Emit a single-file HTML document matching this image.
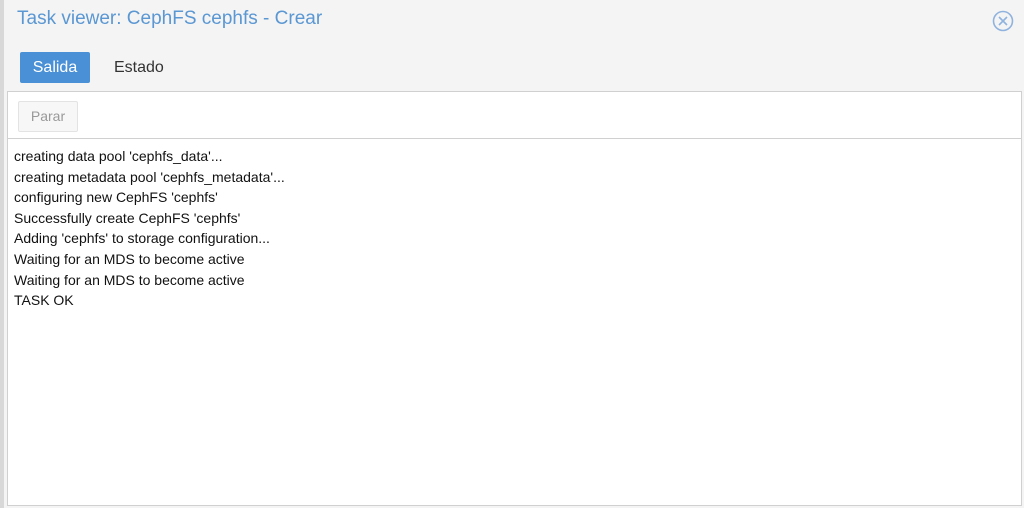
<!DOCTYPE html>
<html><head><meta charset="utf-8"><style>
body{margin:0;width:1024px;height:508px;background:#f4f4f4;font-family:"Liberation Sans",sans-serif;position:relative;overflow:hidden}
.strip{position:absolute;left:0;top:0;width:4px;height:508px;background:#d8d8d8}
.title{position:absolute;left:17px;top:8px;font-size:19px;color:#5a97d3}
.close{position:absolute;left:992px;top:10px}
.tab1{position:absolute;left:20px;top:52px;width:70px;height:31px;background:#4a90d6;border-radius:2px;color:#fff;font-size:16px;line-height:31px;text-align:center}
.tab2{position:absolute;left:114px;top:52px;height:31px;line-height:31px;font-size:16px;color:#333}
.panel{position:absolute;left:7px;top:91px;width:1013px;height:413px;background:#fff;border:1px solid #d0d0d0}
.tb{position:absolute;left:0;top:0;right:0;height:46px;border-bottom:1px solid #d0d0d0}
.btn{position:absolute;left:10px;top:9px;width:58px;height:29px;border:1px solid #e3e3e3;background:#f7f7f7;border-radius:2px;color:#999;font-size:14px;line-height:29px;text-align:center}
.out{position:absolute;left:6px;top:54px;font-size:14px;line-height:20.6px;color:#111}
</style></head><body>
<div class="strip"></div>
<div class="title">Task viewer: CephFS cephfs - Crear</div>
<svg class="close" width="22" height="22" viewBox="0 0 22 22"><circle cx="11" cy="11" r="9.5" fill="none" stroke="#8fb3de" stroke-width="1.6"/><path d="M7 7L15 15M15 7L7 15" stroke="#8fb3de" stroke-width="1.6"/></svg>
<div class="tab1">Salida</div>
<div class="tab2">Estado</div>
<div class="panel">
<div class="tb"><div class="btn">Parar</div></div>
<div class="out">creating data pool 'cephfs_data'...<br>creating metadata pool 'cephfs_metadata'...<br>configuring new CephFS 'cephfs'<br>Successfully create CephFS 'cephfs'<br>Adding 'cephfs' to storage configuration...<br>Waiting for an MDS to become active<br>Waiting for an MDS to become active<br>TASK OK</div>
</div>
</body></html>
